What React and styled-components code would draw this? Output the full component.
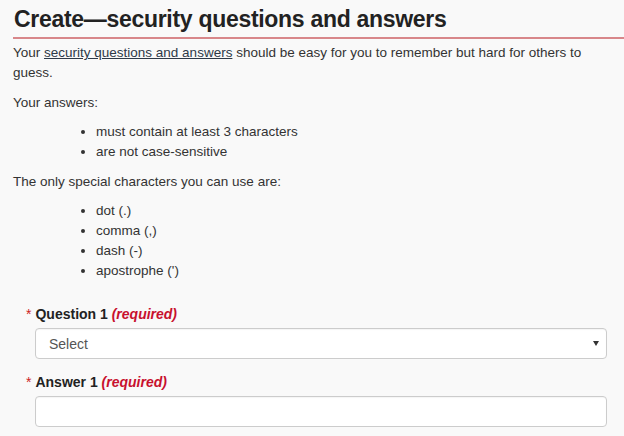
import React from "react";
import styled, { createGlobalStyle } from "styled-components";

const Global = createGlobalStyle`
  html, body { margin: 0; padding: 0; background: #f9f9f9; }
  body { font-family: "Liberation Sans", Arial, sans-serif; color: #333; }
  * { box-sizing: border-box; }
`;

const Page = styled.main`
  padding: 5px 0 0 13px;
  width: 624px;
  font-size: 13.5px;
  line-height: 20px;
`;

const Heading = styled.h1`
  margin: 0 0 4px 0;
  padding: 0 0 4px 1px;
  font-size: 23px;
  letter-spacing: -0.3px;
  line-height: 28px;
  font-weight: 700;
  color: #222;
  border-bottom: 2px solid #d8878a;
`;

const Para = styled.p`
  margin: 0 0 ${(p) => p.$mb ?? 9}px 0;
  padding-right: 14px;
`;

const Link = styled.a`
  color: #2e3a48;
  text-decoration: underline;
`;

const List = styled.ul`
  margin: 0 0 10px 0;
  padding-left: 83px;
  list-style: disc;
`;

const FormGroup = styled.div`
  padding: 0 17px 0 13px;
  margin-top: ${(p) => p.$mt}px;
`;

const Label = styled.label`
  display: block;
  font-size: 14px;
  font-weight: 700;
  color: #222;
  margin-bottom: 4px;
`;

const Star = styled.span`
  color: #cc1f1f;
  font-weight: 400;
  margin-right: 4px;
`;

const Req = styled.em`
  color: #c8102e;
  font-style: italic;
  font-weight: 700;
`;

const Field = styled.div`
  position: relative;
  margin-left: 9px;
  height: 31px;
  background: #fff;
  border: 1px solid #ccc;
  border-radius: 4px;
  box-shadow: inset 0 1px 1px rgba(0, 0, 0, 0.04);
  display: flex;
  align-items: center;
  padding-left: 13px;
  font-size: 14px;
  color: #555;
`;

const Arrow = styled.span`
  position: absolute;
  right: 7px;
  top: 12px;
  width: 0;
  height: 0;
  border-left: 3px solid transparent;
  border-right: 3px solid transparent;
  border-top: 5px solid #333;
`;

export default function App() {
  return (
    <>
      <Global />
      <Page>
        <Heading>Create—security questions and answers</Heading>
        <Para $mb={10}>
          Your <Link href="#">security questions and answers</Link> should be easy for you to remember but hard for others to guess.
        </Para>
        <Para>Your answers:</Para>
        <List>
          <li>must contain at least 3 characters</li>
          <li>are not case-sensitive</li>
        </List>
        <Para>The only special characters you can use are:</Para>
        <List>
          <li>dot (.)</li>
          <li>comma (,)</li>
          <li>dash (-)</li>
          <li>apostrophe (')</li>
        </List>
        <FormGroup $mt={23}>
          <Label><Star>*</Star>Question 1 <Req>(required)</Req></Label>
          <Field>Select<Arrow /></Field>
        </FormGroup>
        <FormGroup $mt={13}>
          <Label><Star>*</Star>Answer 1 <Req>(required)</Req></Label>
          <Field />
        </FormGroup>
      </Page>
    </>
  );
}
